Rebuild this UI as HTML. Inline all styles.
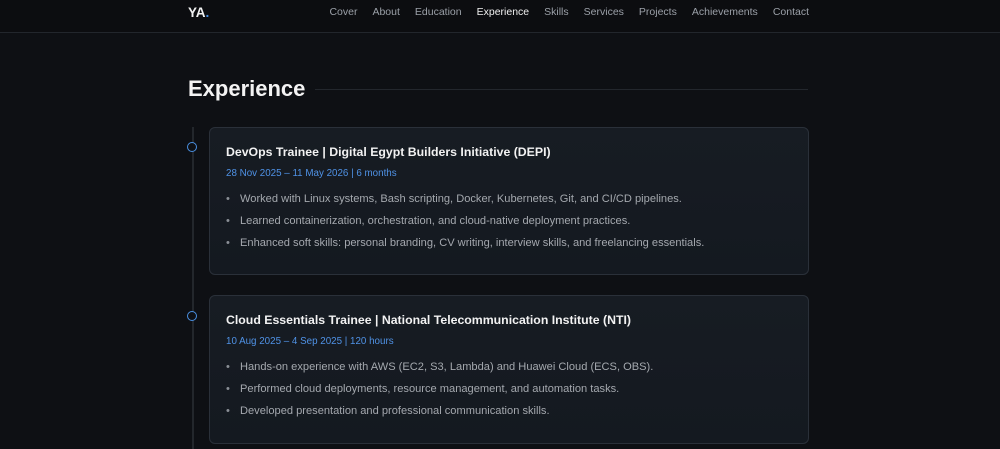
<!DOCTYPE html><html><head><style>
html,body{margin:0;width:1000px;height:449px;overflow:hidden}
body{background:#0e1014;font-family:"Liberation Sans",sans-serif;position:relative}
.nav{position:absolute;left:0;top:0;width:1000px;height:32px;border-bottom:1px solid #22262c;background:#0c0d10}
.logo{position:absolute;left:188px;top:5px;color:#f2f2f2;font-weight:bold;font-size:13.5px}
.logo span{color:#4a90e2}
.links{position:absolute;right:191px;top:6px;font-size:10.5px;color:#9ba0a8}
.links a{margin-left:15px}
.links a.on{color:#f0f0f0}
h1{position:absolute;left:188px;top:76px;margin:0;font-size:22px;color:#f3f3f3;font-weight:600}
.hl{position:absolute;left:315px;top:89px;width:493px;height:1px;background:#23272d}
.tl{position:absolute;left:192px;top:127px;width:2px;height:330px;background:#23272c}
.dot{position:absolute;left:187px;width:8px;height:8px;border:1.5px solid #4a90e2;border-radius:50%;background:#0e1014}
.card{position:absolute;left:209px;width:598px;border:1px solid #2a3039;border-radius:6px;background:linear-gradient(180deg,#171c23,#141920)}
.card h3{margin:0;position:absolute;left:16px;top:17px;font-size:12.3px;color:#f2f2f2;font-weight:bold}
.d{position:absolute;left:16px;top:40px;font-size:9.8px;color:#4f92e6}
ul{position:absolute;left:16px;top:65px;margin:0;padding:0;list-style:none;font-size:11.1px;color:#a4a8ae}
li{height:22px;position:relative;padding-left:14px;white-space:nowrap}
li:before{content:"•";position:absolute;left:0;color:#8a8f96}
</style></head><body>
<div class="nav"><div class="logo">YA<span>.</span></div>
<div class="links"><a>Cover</a><a>About</a><a>Education</a><a class="on">Experience</a><a>Skills</a><a>Services</a><a>Projects</a><a>Achievements</a><a>Contact</a></div></div>
<h1>Experience</h1><div class="hl"></div>
<div class="tl"></div>
<div class="dot" style="top:142px"></div>
<div class="dot" style="top:311px"></div>
<div class="card" style="top:127px;height:146px">
<h3>DevOps Trainee | Digital Egypt Builders Initiative (DEPI)</h3>
<div class="d">28 Nov 2025 – 11 May 2026 | 6 months</div>
<ul><li>Worked with Linux systems, Bash scripting, Docker, Kubernetes, Git, and CI/CD pipelines.</li><li>Learned containerization, orchestration, and cloud-native deployment practices.</li><li>Enhanced soft skills: personal branding, CV writing, interview skills, and freelancing essentials.</li></ul></div>
<div class="card" style="top:295px;height:147px">
<h3>Cloud Essentials Trainee | National Telecommunication Institute (NTI)</h3>
<div class="d">10 Aug 2025 – 4 Sep 2025 | 120 hours</div>
<ul><li>Hands-on experience with AWS (EC2, S3, Lambda) and Huawei Cloud (ECS, OBS).</li><li>Performed cloud deployments, resource management, and automation tasks.</li><li>Developed presentation and professional communication skills.</li></ul></div>
</body></html>
